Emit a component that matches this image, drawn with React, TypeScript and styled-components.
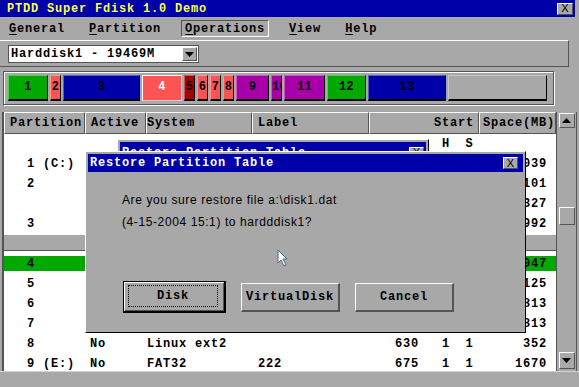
import React from 'react'
import styled, { createGlobalStyle, css } from 'styled-components'

const C = {
  gray: '#a8a8a8',
  dark: '#545454',
  light: '#fcfcfc',
  blue: '#0000a8',
  green: '#00a800',
  salmon: '#fc5454',
  red: '#a80000',
  purple: '#a800a8',
  yellow: '#fcfc54',
}

const GlobalStyle = createGlobalStyle`
  html, body { margin: 0; padding: 0; background: ${C.gray}; }
  body { width: 579px; height: 387px; overflow: hidden; }
`

const Screen = styled.div`
  position: relative;
  width: 579px;
  height: 387px;
  overflow: hidden;
  display: flex;
  flex-direction: column;
  background: ${C.gray};
  color: #000;
  font-family: 'Liberation Mono', 'DejaVu Sans Mono', monospace;
  font-size: 12px;
  font-weight: bold;
  letter-spacing: 0.8px;
`

const TitleBar = styled.div`
  height: 17px;
  flex: none;
  margin-right: 4px;
  display: flex;
  align-items: center;
  justify-content: space-between;
  padding: 0 2px 0 7px;
  background: ${C.blue};
  color: ${C.yellow};
`

const CloseBox = styled.span<{ $w?: number }>`
  width: ${(p) => p.$w ?? 16}px;
  height: 12px;
  flex: none;
  box-sizing: border-box;
  display: flex;
  align-items: center;
  justify-content: center;
  background: ${C.gray};
  border-top: 1px solid ${C.light};
  border-left: 1px solid ${C.light};
  border-right: 1px solid ${C.dark};
  border-bottom: 1px solid ${C.dark};
  color: #000;
  font-family: 'Liberation Sans', sans-serif;
  font-weight: normal;
  font-size: 11px;
  letter-spacing: 0;
  line-height: 1;
`

const MenuBar = styled.div`
  height: 23px;
  flex: none;
  display: flex;
  align-items: center;
  gap: 16px;
  padding-left: 5px;
`

const MenuItem = styled.span<{ $open?: boolean }>`
  height: 15px;
  display: flex;
  align-items: center;
  padding: 0 3px;
  border: 1px solid transparent;
  ${(p) =>
    p.$open &&
    css`
      border-color: ${C.dark} ${C.light} ${C.light} ${C.dark};
    `}
`

const Hot = styled.u`
  text-decoration: underline;
  text-underline-offset: 2px;
`

const ToolPanel = styled.div`
  height: 27px;
  flex: none;
  box-sizing: border-box;
  margin-right: 10px;
  border-top: 1px solid ${C.light};
  border-bottom: 1px solid ${C.dark};
  border-right: 1px solid ${C.dark};
  padding: 4px 0 0 8px;
`

const DiskSelect = styled.div`
  width: 191px;
  height: 18px;
  box-sizing: border-box;
  display: flex;
  align-items: center;
  justify-content: space-between;
  background: #fff;
  border: 1px solid ${C.dark};
  padding: 0 1px 0 2px;
`

const ArrowButton = styled.span<{ $w?: number; $h?: number }>`
  width: ${(p) => p.$w ?? 15}px;
  height: ${(p) => p.$h ?? 14}px;
  flex: none;
  box-sizing: border-box;
  display: flex;
  align-items: center;
  justify-content: center;
  background: ${C.gray};
  border-top: 1px solid ${C.light};
  border-left: 1px solid ${C.light};
  border-right: 1px solid ${C.dark};
  border-bottom: 1px solid ${C.dark};
`

const DiskMap = styled.div`
  margin: 4px 0 0 3px;
  width: 551px;
  height: 34px;
  flex: none;
  box-sizing: border-box;
  border: 1px solid ${C.dark};
  box-shadow: inset 1px 1px 0 ${C.light}, 1px 1px 0 ${C.light};
  padding: 3px 4px 0 4px;
  display: flex;
`

const Segment = styled.div<{ $w: number; $bg: string; $sel?: boolean }>`
  flex: none;
  width: ${(p) => p.$w - 2}px;
  margin-right: 2px;
  height: 26px;
  box-sizing: border-box;
  background: ${(p) => p.$bg};
  color: ${(p) => (p.$sel ? C.light : '#000')};
  border-left: 1px solid rgba(255, 255, 255, 0.35);
  border-top: 1px solid rgba(255, 255, 255, 0.35);
  border-right: 1px solid #000;
  border-bottom: 2px solid #000;
  ${(p) =>
    p.$sel &&
    css`
      border: 1px solid ${C.light};
      border-bottom-color: #d0d0d0;
      border-right-color: #d0d0d0;
    `}
  line-height: 23px;
  letter-spacing: 0.4px;
  text-align: center;
  overflow: hidden;
  white-space: nowrap;
`

const TableArea = styled.div`
  margin-top: 7px;
  height: 259px;
  flex: none;
  display: flex;
`

const TablePanel = styled.div`
  margin-left: 2px;
  width: 552px;
  flex: none;
  border-left: 2px solid ${C.dark};
  display: flex;
  flex-direction: column;
  background: #fff;
`

const headCols = '81px 61px 106px 117px 110px 77px'
const bodyCols = '81px 61px 106px 117px 63px 28px 19px 77px'

const HeaderRow = styled.div`
  height: 22px;
  flex: none;
  display: grid;
  grid-template-columns: ${headCols};
  background: ${C.gray};
`

const HeadCell = styled.div<{ $pl?: number; $pr?: number; $right?: boolean }>`
  box-sizing: border-box;
  border-top: 1px solid ${C.light};
  border-left: 1px solid ${C.light};
  border-right: 1px solid ${C.dark};
  border-bottom: 1px solid ${C.dark};
  padding: 0 ${(p) => p.$pr ?? 0}px 0 ${(p) => p.$pl ?? 0}px;
  line-height: 20px;
  text-align: ${(p) => (p.$right ? 'right' : 'left')};
  white-space: nowrap;
`

const TableBody = styled.div`
  flex: 1;
  overflow: hidden;
`

const rowBg = {
  plain: '#fff',
  ext: `linear-gradient(#fff 0 1px, ${C.gray} 1px 16px, ${C.dark} 16px 17px, #fff 17px)`,
  sel: `linear-gradient(#fff 0 2px, ${C.green} 2px 17px, #fff 17px)`,
}

const BodyRow = styled.div<{ $kind: keyof typeof rowBg }>`
  height: 20px;
  display: grid;
  grid-template-columns: ${bodyCols};
  background: ${(p) => rowBg[p.$kind]};
  line-height: 21px;
`

const Cell = styled.div<{ $pl?: number; $pr?: number; $align?: 'left' | 'right' | 'center' }>`
  padding: 0 ${(p) => p.$pr ?? 0}px 0 ${(p) => p.$pl ?? 0}px;
  text-align: ${(p) => p.$align ?? 'left'};
  white-space: nowrap;
  overflow: hidden;
`

const ScrollBar = styled.div`
  width: 21px;
  flex: none;
  box-sizing: border-box;
  display: flex;
  flex-direction: column;
  align-items: center;
  border-left: 1px solid ${C.dark};
  border-right: 1px solid ${C.dark};
  padding: 1px 0 2px;
`

const ScrollTrack = styled.div`
  flex: 1;
  display: flex;
  flex-direction: column;
`

const Thumb = styled.div`
  margin-top: 79px;
  width: 16px;
  height: 18px;
  box-sizing: border-box;
  background: ${C.gray};
  border-top: 1px solid ${C.light};
  border-left: 1px solid ${C.light};
  border-right: 1px solid ${C.dark};
  border-bottom: 1px solid ${C.dark};
`

const StatusBar = styled.div`
  flex: 1;
  border-top: 1px solid #d4d4d4;
`

const Dialog = styled.div<{ $x: number; $y: number; $w: number; $h: number }>`
  position: absolute;
  left: ${(p) => p.$x}px;
  top: ${(p) => p.$y}px;
  width: ${(p) => p.$w}px;
  height: ${(p) => p.$h}px;
  box-sizing: border-box;
  background: ${C.gray};
  border-top: 1px solid ${C.light};
  border-left: 1px solid ${C.light};
  border-right: 1px solid #000;
  border-bottom: 1px solid #000;
  padding: 2px;
  display: flex;
  flex-direction: column;
`

const DialogTitle = styled.div<{ $h: number; $pr: number; $pt?: number }>`
  height: ${(p) => p.$h}px;
  flex: none;
  box-sizing: border-box;
  display: flex;
  align-items: center;
  justify-content: space-between;
  padding: ${(p) => p.$pt ?? 0}px ${(p) => p.$pr}px 0 2px;
  background: ${C.blue};
  color: ${C.light};
`

const Message = styled.div`
  padding: 17px 0 0 34px;
  font-family: 'Liberation Sans', 'DejaVu Sans', sans-serif;
  font-weight: normal;
  font-size: 12px;
  letter-spacing: 0.6px;
  line-height: 22px;
`

const ButtonRow = styled.div`
  margin-top: 48px;
  padding-left: 35px;
  display: flex;
  align-items: center;
  gap: 15px;
`

const DlgButton = styled.div<{ $default?: boolean }>`
  box-sizing: border-box;
  width: ${(p) => (p.$default ? 103 : 99)}px;
  height: ${(p) => (p.$default ? 32 : 29)}px;
  display: flex;
  background: ${C.gray};
  ${(p) =>
    p.$default
      ? css`
          border: 1px solid #000;
          border-right-width: 2px;
          border-bottom-width: 2px;
          box-shadow: inset 1px 1px 0 ${C.light}, inset -1px -1px 0 ${C.dark};
          padding: 3px 6px 4px 4px;
        `
      : css`
          border-top: 1px solid ${C.light};
          border-left: 1px solid ${C.light};
          border-right: 2px solid ${C.dark};
          border-bottom: 2px solid ${C.dark};
        `}
`

const FocusRing = styled.span<{ $on?: boolean }>`
  flex: 1;
  display: flex;
  align-items: center;
  justify-content: center;
  border: 1px dotted ${(p) => (p.$on ? '#000' : 'transparent')};
`

const Pointer = styled.svg`
  position: absolute;
  left: 277px;
  top: 249px;
`

const Tri = ({ up }: { up?: boolean }) => (
  <svg width="9" height="5" viewBox="0 0 9 5">
    <polygon points={up ? '0,5 9,5 4.5,0' : '0,0 9,0 4.5,5'} fill="#000" />
  </svg>
)

const segments = [
  { n: '1', w: 42, bg: C.green },
  { n: '2', w: 13, bg: C.salmon },
  { n: '3', w: 79, bg: C.blue },
  { n: '4', w: 42, bg: C.salmon, sel: true },
  { n: '5', w: 13, bg: C.red },
  { n: '6', w: 13, bg: C.salmon },
  { n: '7', w: 13, bg: C.salmon },
  { n: '8', w: 13, bg: C.salmon },
  { n: '9', w: 35, bg: C.purple },
  { n: '10', w: 13, bg: C.purple },
  { n: '11', w: 43, bg: C.purple },
  { n: '12', w: 41, bg: C.green },
  { n: '13', w: 80, bg: C.blue },
  { n: '', w: 101, bg: C.gray },
]

type Row = {
  kind?: keyof typeof rowBg
  part?: string
  active?: string
  sys?: string
  label?: string
  cyl?: string
  h?: string
  s?: string
  space?: string
}

const rows: Row[] = [
  { h: 'H', s: 'S' },
  { part: '1 (C:)', space: '2039' },
  { part: '2', space: '1101' },
  { space: '1327' },
  { part: '3', space: '1992' },
  { kind: 'ext' },
  { kind: 'sel', part: '4', space: '2047' },
  { part: '5', space: '1125' },
  { part: '6', space: '1813' },
  { part: '7', space: '1813' },
  { part: '8', active: 'No', sys: 'Linux ext2', cyl: '630', h: '1', s: '1', space: '352' },
  { part: '9 (E:)', active: 'No', sys: 'FAT32', label: '222', cyl: '675', h: '1', s: '1', space: '1670' },
]

export default function App() {
  return (
    <Screen>
      <GlobalStyle />
      <TitleBar>
        <span>PTDD Super Fdisk 1.0 Demo</span>
        <CloseBox>X</CloseBox>
      </TitleBar>

      <MenuBar>
        <MenuItem><span><Hot>G</Hot>eneral</span></MenuItem>
        <MenuItem><span><Hot>P</Hot>artition</span></MenuItem>
        <MenuItem $open><span><Hot>O</Hot>perations</span></MenuItem>
        <MenuItem><span><Hot>V</Hot>iew</span></MenuItem>
        <MenuItem><span><Hot>H</Hot>elp</span></MenuItem>
      </MenuBar>

      <ToolPanel>
        <DiskSelect>
          <span>Harddisk1 - 19469M</span>
          <ArrowButton><Tri /></ArrowButton>
        </DiskSelect>
      </ToolPanel>

      <DiskMap>
        {segments.map((s, i) => (
          <Segment key={i} $w={s.w} $bg={s.bg} $sel={s.sel}>
            {s.n}
          </Segment>
        ))}
      </DiskMap>

      <TableArea>
        <TablePanel>
          <HeaderRow>
            <HeadCell $pl={5}>Partition</HeadCell>
            <HeadCell $pl={5}>Active</HeadCell>
            <HeadCell>System</HeadCell>
            <HeadCell $pl={5}>Label</HeadCell>
            <HeadCell $right $pr={4}>Start</HeadCell>
            <HeadCell $pl={3}>Space(MB)</HeadCell>
          </HeaderRow>
          <TableBody>
            {rows.map((r, i) => (
              <BodyRow key={i} $kind={r.kind ?? 'plain'}>
                <Cell $pl={23}>{r.part}</Cell>
                <Cell $pl={5}>{r.active}</Cell>
                <Cell $pl={1}>{r.sys}</Cell>
                <Cell $pl={6}>{r.label}</Cell>
                <Cell $align="right" $pr={13}>{r.cyl}</Cell>
                <Cell $align="center">{r.h}</Cell>
                <Cell $align="center">{r.s}</Cell>
                <Cell $align="right" $pr={9}>{r.space}</Cell>
              </BodyRow>
            ))}
          </TableBody>
        </TablePanel>
        <ScrollBar>
          <ArrowButton $w={16} $h={15}><Tri up /></ArrowButton>
          <ScrollTrack>
            <Thumb />
          </ScrollTrack>
          <ArrowButton $w={16} $h={17}><Tri /></ArrowButton>
        </ScrollBar>
      </TableArea>

      <StatusBar />

      <Dialog $x={117} $y={139} $w={312} $h={150}>
        <DialogTitle $h={16} $pr={2} $pt={5}>
          <span>Restore Partition Table</span>
          <CloseBox $w={15}>X</CloseBox>
        </DialogTitle>
      </Dialog>

      <Dialog $x={85} $y={151} $w={441} $h={182}>
        <DialogTitle $h={18} $pr={5}>
          <span>Restore Partition Table</span>
          <CloseBox $w={15}>X</CloseBox>
        </DialogTitle>
        <Message>
          Are you sure restore file a:\disk1.dat
          <br />
          (4-15-2004 15:1) to hardddisk1?
        </Message>
        <ButtonRow>
          <DlgButton $default>
            <FocusRing $on>Disk</FocusRing>
          </DlgButton>
          <DlgButton>
            <FocusRing>VirtualDisk</FocusRing>
          </DlgButton>
          <DlgButton>
            <FocusRing>Cancel</FocusRing>
          </DlgButton>
        </ButtonRow>
      </Dialog>

      <Pointer width="12" height="18" viewBox="0 0 12 18">
        <path d="M1 1 L1 14 L4 11 L7 17 L9 16 L6 10 L10 10 Z" fill="#fff" stroke="#4a6a8c" strokeWidth="1" strokeLinejoin="round" />
      </Pointer>
    </Screen>
  )
}
